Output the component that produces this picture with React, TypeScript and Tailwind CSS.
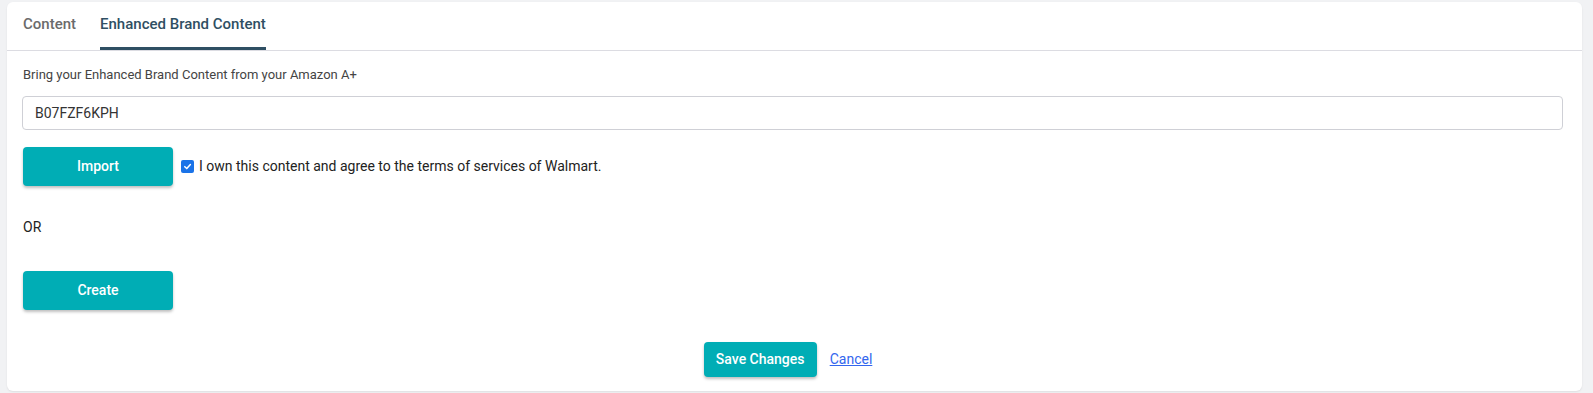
import React from 'react';

const font = { fontFamily: 'Roboto, "Liberation Sans", sans-serif' };

const TealButton: React.FC<{ label: string; className?: string }> = ({ label, className }) => (
  <button
    className={`rounded-[4px] bg-[#00adb5] text-white text-[14px] font-medium shadow-[0_2px_3px_rgba(0,0,0,0.25)] ${className ?? ''}`}
  >
    {label}
  </button>
);

export default function App() {
  const [tab, setTab] = React.useState('ebc');
  const [agreed, setAgreed] = React.useState(true);

  return (
    <div className="min-h-[393px] w-full bg-[#f1f2f4] pt-[2px] pl-[7px] pr-[11px]" style={font}>
      <div className="h-[389px] rounded-md bg-white shadow-[0_1px_2px_rgba(0,0,0,0.08)] flex flex-col">
        <div className="h-[49px] border-b border-[#dcdce2] flex items-end gap-6 pl-4">
          <button
            onClick={() => setTab('content')}
            className={`h-[48px] flex items-center text-[15px] font-medium border-b-[3px] ${
              tab === 'content' ? 'border-[#2f4f63] text-[#2f4f63]' : 'border-transparent text-[#6b6b6b]'
            }`}
          >
            Content
          </button>
          <button
            onClick={() => setTab('ebc')}
            className={`h-[48px] flex items-center text-[15px] font-medium border-b-[3px] ${
              tab === 'ebc' ? 'border-[#2f4f63] text-[#2f4f63]' : 'border-transparent text-[#6b6b6b]'
            }`}
          >
            Enhanced Brand Content
          </button>
        </div>

        <div className="flex flex-col pl-4 pr-[18px]">
          <p className="mt-[15px] text-[13px] leading-[18px] text-[#444]">
            Bring your Enhanced Brand Content from your Amazon A+
          </p>
          <input
            defaultValue="B07FZF6KPH"
            className="mt-[12px] h-[34px] w-full -ml-px rounded-[4px] border border-[#cfd0d6] px-3 text-[14px] text-[#333] outline-none"
          />

          <div className="mt-[17px] flex items-center">
            <TealButton label="Import" className="w-[150px] h-[39px]" />
            <label className="ml-[8px] flex items-center gap-[5px] text-[14px] text-[#222] cursor-pointer">
              <span
                onClick={() => setAgreed(!agreed)}
                className={`w-[13px] h-[13px] rounded-[2px] flex items-center justify-center ${
                  agreed ? 'bg-[#1a73e8]' : 'border border-[#777] bg-white'
                }`}
              >
                {agreed && (
                  <svg width="9" height="9" viewBox="0 0 10 10" fill="none">
                    <path d="M2 5.2 L4.2 7.3 L8.2 2.8" stroke="white" strokeWidth="1.7" strokeLinecap="round" strokeLinejoin="round" />
                  </svg>
                )}
              </span>
              I own this content and agree to the terms of services of Walmart.
            </label>
          </div>

          <p className="mt-[31px] text-[14px] leading-[20px] text-[#222]">OR</p>

          <TealButton label="Create" className="mt-[34px] w-[150px] h-[39px]" />
        </div>

        <div className="mt-[32px] flex items-center justify-center gap-[13px] pr-[13px]">
          <TealButton label="Save Changes" className="w-[113px] h-[35px]" />
          <a href="#" className="text-[14px] text-[#3366ee] underline">
            Cancel
          </a>
        </div>
      </div>
    </div>
  );
}
